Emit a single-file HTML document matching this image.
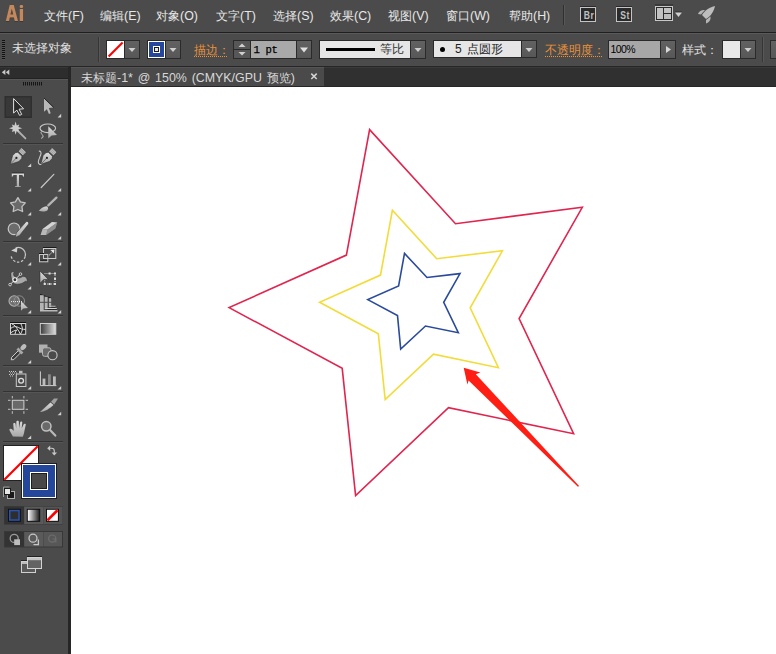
<!DOCTYPE html>
<html><head><meta charset="utf-8">
<style>
*{margin:0;padding:0;box-sizing:border-box}
html,body{width:776px;height:654px;overflow:hidden;background:#fff;font-family:"Liberation Sans",sans-serif}
.a{position:absolute}
#menu{left:0;top:0;width:776px;height:32px;background:#4b4b4b}
#line1{left:0;top:32px;width:776px;height:1px;background:#1f1f1f}
#ctl{left:0;top:33px;width:776px;height:33px;background:#4b4b4b;border-top:1px solid #5a5a5a}
#line2{left:0;top:66px;width:776px;height:1px;background:#262626}
#tools{left:0;top:67px;width:68px;height:587px;background:#4b4b4b}
#tabbar{left:71px;top:67px;width:705px;height:20px;background:#303030;border-top:1px solid #3a3a3a}
#tab{left:71px;top:67px;width:253px;height:19px;background:#4a4a4a;border-top:1px solid #555}
#tabline{left:71px;top:86px;width:705px;height:1px;background:#262626}
#canvas{left:71px;top:87px;width:705px;height:567px;background:#fff}
#vsep{left:68px;top:67px;width:3px;height:587px;background:#262626}
.mi{position:absolute;top:8px;font-size:12.4px;color:#e8e8e8;white-space:nowrap;line-height:16px}
.lbl{position:absolute;font-size:12px;white-space:nowrap;line-height:14px}
</style></head><body>
<div class="a" id="menu"></div>
<div class="a" id="line1"></div>
<div class="a" id="ctl"></div>
<div class="a" id="line2"></div>
<div class="a" id="tools"></div>
<div class="a" id="vsep"></div>
<div class="a" id="tabbar"></div>
<div class="a" id="tab"></div>
<div class="a" id="tabline"></div>
<div class="a" id="canvas"></div>

<!-- tools -->
<svg class="a" style="left:0;top:0" width="68" height="654" viewBox="0 0 68 654">
<defs>
<linearGradient id="g" x1="0" y1="0" x2="0" y2="1"><stop offset="0" stop-color="#dcdcdc"/><stop offset="1" stop-color="#a8a8a8"/></linearGradient>
<linearGradient id="gh" x1="0" y1="0" x2="1" y2="0"><stop offset="0" stop-color="#3a3a3a"/><stop offset="1" stop-color="#e0e0e0"/></linearGradient>
<linearGradient id="gw" x1="0" y1="0" x2="1" y2="0"><stop offset="0" stop-color="#ffffff"/><stop offset="1" stop-color="#222"/></linearGradient>
</defs>
<!-- header -->
<rect x="0" y="67" width="68" height="1" fill="#363636"/>
<rect x="0" y="68" width="68" height="10" fill="#2d2d2d"/>
<rect x="0" y="78" width="68" height="1" fill="#222"/>
<rect x="0" y="79" width="68" height="1" fill="#575757"/>
<polygon points="1.8,72.3 5.4,69.5 5.4,75.1" fill="#c8c8c8"/>
<polygon points="5.8,72.3 9.3,69.5 9.3,75.1" fill="#c8c8c8"/>
<g fill="#151515">
<rect x="23" y="82" width="1" height="3.5"/><rect x="25" y="82" width="1" height="3.5"/><rect x="27" y="82" width="1" height="3.5"/><rect x="29" y="82" width="1" height="3.5"/><rect x="31" y="82" width="1" height="3.5"/><rect x="33" y="82" width="1" height="3.5"/><rect x="35" y="82" width="1" height="3.5"/><rect x="37" y="82" width="1" height="3.5"/><rect x="39" y="82" width="1" height="3.5"/><rect x="41" y="82" width="1" height="3.5"/>
</g>
<!-- separators -->
<rect x="3" y="143" width="60" height="1" fill="#333"/><rect x="3" y="144" width="60" height="1" fill="#555"/>
<rect x="3" y="241" width="60" height="1" fill="#333"/><rect x="3" y="242" width="60" height="1" fill="#555"/>
<rect x="3" y="315" width="60" height="1" fill="#333"/><rect x="3" y="316" width="60" height="1" fill="#555"/>
<rect x="3" y="365" width="60" height="1" fill="#333"/><rect x="3" y="366" width="60" height="1" fill="#555"/>
<rect x="3" y="391" width="60" height="1" fill="#333"/><rect x="3" y="392" width="60" height="1" fill="#555"/>
<rect x="3" y="441" width="60" height="1" fill="#333"/><rect x="3" y="442" width="60" height="1" fill="#555"/>
<!-- corner triangles -->
<g fill="#d0d0d0">
<polygon points="61.2,113.8 61.2,117.4 57.6,117.4"/>
<polygon points="31.2,163.5 31.2,167.1 27.6,167.1"/>
<polygon points="31.2,188 31.2,191.5 27.6,191.5"/>
<polygon points="61.2,188 61.2,191.5 57.6,191.5"/>
<polygon points="31.2,212 31.2,215.5 27.6,215.5"/>
<polygon points="61.2,212 61.2,215.5 57.6,215.5"/>
<polygon points="31.2,236 31.2,239.5 27.6,239.5"/>
<polygon points="61.2,236 61.2,239.5 57.6,239.5"/>
<polygon points="31.2,262 31.2,265.5 27.6,265.5"/>
<polygon points="61.2,262 61.2,265.5 57.6,265.5"/>
<polygon points="31.2,286 31.2,289.5 27.6,289.5"/>
<polygon points="31.2,310 31.2,313.5 27.6,313.5"/>
<polygon points="61.2,310 61.2,313.5 57.6,313.5"/>
<polygon points="31.2,360 31.2,363.5 27.6,363.5"/>
<polygon points="31.2,386 31.2,389.5 27.6,389.5"/>
<polygon points="61.2,386 61.2,389.5 57.6,389.5"/>
<polygon points="61.2,411.8 61.2,415.3 57.6,415.3"/>
<polygon points="31.2,435.5 31.2,439 27.6,439"/>
</g>
<!-- 1 selection (selected) -->
<rect x="4.5" y="96" width="27.5" height="22" fill="#2f2f2f"/>
<rect x="6" y="97.5" width="24.5" height="19" fill="#383838"/>
<path d="M13.6,98.6 L13.6,113 L16.9,110.2 L19.6,115.4 L21.7,114.4 L19.1,109.2 L23.6,108.8 Z" fill="#2a2a2a" stroke="#e0e0e0" stroke-width="1" stroke-linejoin="miter"/>
<!-- 2 direct selection -->
<path d="M44,98.4 L44,111.8 L46.9,109.3 L48.9,114 L50.7,113.3 L48.9,108 L53.2,107.6 Z" fill="#b8b8b8"/>
<line x1="44" y1="98" x2="53.6" y2="107.3" stroke="#1a1a1a" stroke-width="0.8"/>
<!-- 3 magic wand -->
<line x1="17.5" y1="130.5" x2="25.4" y2="138.4" stroke="#b0b0b0" stroke-width="1.9" stroke-linecap="round"/>
<polygon points="15.6,121.6 16.7,125.4 19.3,124.5 18.4,127.1 22.2,128.2 18.4,129.3 19.3,131.9 16.7,131.0 15.6,134.8 14.5,131.0 11.9,131.9 12.8,129.3 9.0,128.2 12.8,127.1 11.9,124.5 14.5,125.4" fill="#cdcdcd"/>
<!-- 4 lasso -->
<ellipse cx="47.8" cy="128.3" rx="7.8" ry="4.3" fill="none" stroke="#c8c8c8" stroke-width="1.1"/>
<path d="M41.5,131.5 C40,133 42.5,134.5 43,136 C43.3,137.5 42,138.5 41,138" fill="none" stroke="#c8c8c8" stroke-width="1"/>
<path d="M48.3,126.2 L48.3,138.6 L51.6,135.6 L57,134.9 Z" fill="url(#g)"/>
<!-- 5 pen -->
<g id="pen">
<polygon points="10.2,164.4 12.6,155.6 15.4,152.7 17.8,152.3 22.0,156.3 21.6,158.7 18.8,161.6" fill="url(#g)" stroke="#2c2c2c" stroke-width="0.6" stroke-linejoin="round"/>
<polygon points="18.2,151.3 21.6,147.6 26.4,152.2 22.9,155.8" fill="#b8b8b8" stroke="#2c2c2c" stroke-width="0.6"/>
<line x1="19.4" y1="150.1" x2="24.0" y2="154.5" stroke="#8a8a8a" stroke-width="0.5"/>
<line x1="20.5" y1="148.9" x2="25.1" y2="153.4" stroke="#8a8a8a" stroke-width="0.5"/>
<circle cx="16.4" cy="157.9" r="1.1" fill="#222"/>
<line x1="10.5" y1="164.1" x2="16.4" y2="157.9" stroke="#444" stroke-width="0.6"/>
</g>
<!-- 6 curvature pen -->
<use href="#pen" x="30.5" y="0"/>
<path d="M38.8,151.2 C40.6,150.8 41.5,152.5 40.8,154.5 C40,157 38.4,159.5 38.3,162 C38.3,164 39.6,164.6 41.4,164.4" fill="none" stroke="#c8c8c8" stroke-width="1.1"/>
<!-- 7 T -->
<rect x="12.2" y="172.6" width="11.6" height="1" fill="#1e1e1e"/>
<path d="M11.8,173.6 H24 V176.8 H23.3 C23.1,175.6 22.6,175.1 21.2,175.1 H19 V185.4 C19,186 19.6,186.2 20.8,186.3 V187.1 H15 V186.3 C16.2,186.2 16.8,186 16.8,185.4 V175.1 H14.6 C13.2,175.1 12.7,175.6 12.5,176.8 H11.8 Z" fill="url(#g)"/>
<!-- 8 line -->
<line x1="41.2" y1="187.5" x2="53.8" y2="174.3" stroke="#c8c8c8" stroke-width="1.2" stroke-linecap="round"/>
<!-- 9 star -->
<polygon points="17.9,197.6 20.4,201.9 25.3,202.9 21.9,206.6 22.6,211.5 17.9,209.5 13.2,211.5 13.9,206.6 10.5,202.9 15.4,201.9" fill="#6a6a6a" stroke="#c4c4c4" stroke-width="1.3" stroke-linejoin="round"/>
<!-- 10 brush -->
<line x1="48.3" y1="205.4" x2="56.4" y2="197.6" stroke="#b4b4b4" stroke-width="2.3" stroke-linecap="round"/>
<path d="M38.8,210.7 C40.5,208.6 43.6,206.6 46.6,206.2 C48.4,206.7 48.6,209 47.2,210.4 C45,212 41.6,211.7 38.8,210.7 Z" fill="url(#g)"/>
<!-- 11 shaper -->
<circle cx="14" cy="228.8" r="5.8" fill="#6c6c6c" stroke="#c8c8c8" stroke-width="1.2"/>
<path d="M26.2,221.6 C27.6,220.8 29.4,222.6 28.6,224 L19.6,235.4 L15.2,237.4 L16.4,232.8 Z" fill="url(#g)" stroke="#333" stroke-width="0.6"/>
<!-- 12 eraser -->
<path d="M40.6,235 L42.6,229 L52,222 L57.2,222.6 L55.4,228.4 L46.2,235 Z" fill="#6e6e6e"/>
<path d="M42.6,229 L52,222 L57.2,222.6 L47.6,229.6 Z" fill="#d4d4d4"/>
<path d="M40.6,235 L42.6,229 L47.6,229.6 L46.2,235 Z" fill="#b8b8b8"/>
<path d="M47.6,229.6 L57.2,222.6 L55.4,228.4 L46.2,235 Z" fill="#8f8f8f"/>
<!-- 13 rotate -->
<path d="M15.6,248 A7.1,7.1 0 0 1 25.1,256.6" fill="none" stroke="#c4c4c4" stroke-width="1.25"/>
<path d="M25.1,256.6 A7.1,7.1 0 0 1 11.1,255.6" fill="none" stroke="#c4c4c4" stroke-width="1.3" stroke-dasharray="2.4 1.7"/>
<polygon points="11.2,250.6 17.4,247.2 16.9,252.4" fill="#d0d0d0"/>
<!-- 14 scale -->
<rect x="43" y="247" width="13.5" height="1" fill="#1a1a1a"/>
<rect x="43.5" y="248.5" width="12.3" height="10" fill="#484848" stroke="#cccccc" stroke-width="1"/>
<rect x="39" y="253" width="5" height="1" fill="#1a1a1a"/>
<rect x="39.5" y="254.5" width="8.3" height="7.3" fill="none" stroke="#c8c8c8" stroke-width="1"/>
<rect x="40.3" y="259.8" width="6.8" height="1" fill="#1e1e1e"/>
<line x1="49.2" y1="255.2" x2="53" y2="251.4" stroke="#e0e0e0" stroke-width="1" stroke-dasharray="1.1 0.6"/>
<polygon points="54.4,249.6 50.4,250 54,253.6" fill="#e8e8e8"/>
<!-- 15 puppet -->
<path d="M10.9,273.6 C10.9,272 12.6,271.1 14.4,272.1 C13.4,273 13.2,274.2 13.7,275.3 C15.2,278.2 19.2,279 22.4,276.6 C24.8,275.8 27,277.4 27.2,280.2 L27,282.4 C26.6,281.2 25.8,280.8 25,281.6 C22.6,283.8 17.8,284.8 14.4,283.8 C11.8,281.6 10.8,277.2 10.9,273.6 Z" fill="#a8a8a8" stroke="#2e2e2e" stroke-width="0.5"/>
<line x1="10.1" y1="284.6" x2="20.5" y2="274.1" stroke="#e8e8e8" stroke-width="0.9"/>
<circle cx="14.9" cy="279.8" r="2" fill="#333" stroke="#f0f0f0" stroke-width="1.1"/>
<circle cx="10.1" cy="284.6" r="1.3" fill="#444" stroke="#e8e8e8" stroke-width="0.8"/>
<circle cx="20.5" cy="274.1" r="1.3" fill="#444" stroke="#e8e8e8" stroke-width="0.8"/>
<!-- 16 free transform -->
<path d="M44.5,273.5 H55 V284 H44.7 V279" fill="none" stroke="#c8c8c8" stroke-width="1" stroke-dasharray="1 1"/>
<g fill="#e0e0e0"><rect x="48.6" y="272.5" width="2" height="2"/><rect x="54" y="272.5" width="2" height="2"/><rect x="54" y="277.9" width="2" height="2"/><rect x="54" y="283" width="2" height="2"/><rect x="48.6" y="283" width="2" height="2"/><rect x="43.7" y="283" width="2" height="2"/></g>
<path d="M40,271 L48.3,279.4 L43.6,279.6 L40,283.3 Z" fill="url(#g)" stroke="#222" stroke-width="0.5"/>
<!-- 17 shape builder -->
<circle cx="14.2" cy="301" r="5.2" fill="#6e6e6e" stroke="#b0b0b0" stroke-width="1.1"/>
<circle cx="19.3" cy="301" r="5.2" fill="none" stroke="#8e8e8e" stroke-width="1"/>
<line x1="11" y1="301.6" x2="22" y2="301.6" stroke="#f0f0f0" stroke-width="1" stroke-dasharray="1 1"/>
<path d="M21,301 L21,310.8 L23.3,308.4 L28,308 Z" fill="url(#g)"/>
<!-- 18 perspective grid -->
<line x1="40" y1="294.3" x2="51.4" y2="298.3" stroke="#1a1a1a" stroke-width="1"/>
<g fill="#b4b4b4">
<rect x="40" y="295.2" width="3.7" height="6.6"/><rect x="40" y="302.8" width="3.7" height="7.4"/>
<rect x="44.8" y="296.8" width="2.8" height="5"/><rect x="44.8" y="302.8" width="2.8" height="5.2"/>
<rect x="49" y="298.2" width="2.2" height="3.6"/><rect x="49" y="302.8" width="2.2" height="3"/>
</g>
<g fill="#d4d4d4"><rect x="49" y="305.8" width="6.5" height="1"/><rect x="44.8" y="308" width="12" height="1"/><rect x="40" y="310.2" width="17.5" height="1.2"/></g>
<g fill="#1e1e1e"><rect x="51.2" y="306.8" width="4.3" height="0.8"/><rect x="47.6" y="309" width="9.2" height="0.8"/></g>
<!-- 19 mesh -->
<rect x="10" y="322" width="16" height="1" fill="#151515"/>
<rect x="10.5" y="323.5" width="15.2" height="10.8" fill="#262626" stroke="#d4d4d4" stroke-width="1"/>
<path d="M10.5,328.6 C13,326.4 16,326 18.5,327.5 C20.5,328.8 22.5,329.4 25.5,329.4 M12,324 C14.5,325 16,326.5 17,328.5 C18.3,330.5 19.5,332 20.5,334.2 M20.8,323.6 C22,326 22.6,328 22.3,330 C22,331.5 21.2,333 20.5,334.2 M10.5,333 C12.5,331.5 14.5,330.5 16.6,330 M15,334.2 C15.2,332.5 15.8,331.2 16.6,330" fill="none" stroke="#e0e0e0" stroke-width="1"/>
<!-- 20 gradient -->
<rect x="40.3" y="323.5" width="15.5" height="10.8" fill="url(#gh)" stroke="#cfcfcf" stroke-width="1"/>
<!-- 21 eyedropper -->
<path d="M11.3,359.8 L11.6,357.4 L18.8,350.2 L21,352.4 L13.8,359.6 Z" fill="#3a3a3a" stroke="#dcdcdc" stroke-width="0.9"/>
<ellipse cx="23.5" cy="347.2" rx="3.4" ry="2.3" transform="rotate(-45 23.4 347.3)" fill="#bdbdbd"/>
<rect x="16.4" y="349.6" width="7" height="2.8" transform="rotate(45 19.9 351)" fill="#a8a8a8"/>
<!-- 22 blend -->
<rect x="39" y="344.5" width="8.5" height="8.2" fill="#b0b0b0"/>
<rect x="42.5" y="347.8" width="8.5" height="8.5" rx="2" fill="#6a6a6a" stroke="#b8b8b8" stroke-width="1"/>
<circle cx="52.5" cy="355.2" r="4.6" fill="#4b4b4b" stroke="#c8c8c8" stroke-width="1.1"/>
<!-- 23 symbol sprayer -->
<g fill="#c8c8c8">
<rect x="9" y="371" width="1" height="1"/><rect x="11" y="371" width="1" height="1"/><rect x="13" y="371" width="1" height="1"/><rect x="15" y="371" width="1" height="1"/>
<rect x="10" y="372.5" width="1" height="1"/><rect x="12" y="372.5" width="1" height="1"/><rect x="14" y="372.5" width="1" height="1"/><rect x="16" y="372.5" width="1" height="1"/>
<rect x="9" y="374" width="1" height="1"/><rect x="11" y="374" width="1" height="1"/><rect x="13" y="374" width="1" height="1"/>
<rect x="10" y="375.5" width="1" height="1"/><rect x="12" y="375.5" width="1" height="1"/>
</g>
<rect x="19" y="370.8" width="3.5" height="2.5" fill="#c0c0c0"/>
<rect x="16.3" y="374" width="9.6" height="12.5" fill="#4a4a4a" stroke="#c8c8c8" stroke-width="1"/>
<circle cx="21.1" cy="380.8" r="2.4" fill="#4a4a4a" stroke="#e0e0e0" stroke-width="1.3"/>
<!-- 24 column graph -->
<path d="M40.4,371.4 V385.6 H56.4" fill="none" stroke="#d0d0d0" stroke-width="1"/>
<rect x="42.6" y="378.6" width="2.8" height="6.5" fill="#bdbdbd"/>
<rect x="48" y="374.3" width="2.8" height="10.8" fill="#8a8a8a"/>
<rect x="53" y="376.4" width="2.8" height="8.7" fill="#bdbdbd"/>
<!-- 25 artboard -->
<rect x="12.3" y="400.3" width="11.6" height="9" fill="#6a6a6a" stroke="#d0d0d0" stroke-width="1"/>
<g stroke="#d0d0d0" stroke-width="0.9">
<line x1="8" y1="400.3" x2="10.5" y2="400.3"/><line x1="25.6" y1="400.3" x2="28" y2="400.3"/>
<line x1="8" y1="409.3" x2="10.5" y2="409.3"/><line x1="25.6" y1="409.3" x2="28" y2="409.3"/>
<line x1="12.3" y1="396" x2="12.3" y2="398.4"/><line x1="23.9" y1="396" x2="23.9" y2="398.4"/>
<line x1="12.3" y1="411.2" x2="12.3" y2="413.8"/><line x1="23.9" y1="411.2" x2="23.9" y2="413.8"/>
</g>
<!-- 26 slice -->
<path d="M40,412 L50.5,402.5 L53.5,405 C50,408.5 45,411.5 40,412 Z" fill="url(#g)"/>
<path d="M51,401.8 L54,398.4 L58,398.4 L54.2,404.6 Z" fill="#a0a0a0"/>
<!-- 27 hand -->
<path transform="translate(17.6,0) scale(1.2,1) translate(-16.2,0)" d="M12.3,436.5 C10.8,433 9.5,431 9.3,429.5 C9.8,428.4 11.2,428.6 12,429.8 L13,431 L12.6,424 C12.6,422.8 14.4,422.8 14.5,424 L15,428.5 L15.2,421.6 C15.3,420.3 17.2,420.3 17.2,421.6 L17.4,428.4 L18.3,422.4 C18.5,421.2 20.2,421.4 20.1,422.6 L19.6,428.6 L21.3,424.3 C21.7,423.3 23.2,423.7 23,424.8 L21.8,431.5 C21.5,434 21,435.5 20.5,436.7 Z" fill="url(#g)"/>
<!-- 28 zoom -->
<circle cx="46.3" cy="426.3" r="4.7" fill="#6a6a6a" stroke="#c0c0c0" stroke-width="1.5"/>
<line x1="49.8" y1="429.8" x2="55.3" y2="435.6" stroke="#b8b8b8" stroke-width="2.2" stroke-linecap="round"/>
<!-- fill / stroke -->
<rect x="3" y="445" width="36" height="36" fill="#222"/>
<rect x="4" y="446" width="34" height="34" fill="#fff"/>
<line x1="4.3" y1="479.7" x2="37.7" y2="446.3" stroke="#ff0000" stroke-width="2.2"/>
<path d="M49.5,448.3 H51.6 C53.4,448.3 54.3,449.2 54.3,451 V453" fill="none" stroke="#c8c8c8" stroke-width="1.1"/>
<polygon points="47.2,448.3 50.2,445.6 50.2,451" fill="#c8c8c8"/>
<polygon points="51.6,452.6 57,452.6 54.3,455.6" fill="#c8c8c8"/>
<rect x="21" y="463" width="36" height="36" fill="#1e1e1e"/>
<rect x="22" y="464" width="34" height="34" fill="#fff"/>
<rect x="23" y="465" width="32" height="32" fill="#24479c"/>
<rect x="30" y="472" width="18" height="18" fill="#fff"/>
<rect x="31" y="473" width="16" height="16" fill="#1e1e1e"/>
<rect x="32" y="474" width="14" height="14" fill="#484848"/>
<!-- default fill stroke -->
<path d="M3.5,497 V487 H9.5" fill="none" stroke="#9a9a9a" stroke-width="1"/>
<rect x="7.5" y="491.5" width="7" height="7" fill="#1a1a1a" stroke="#b0b0b0" stroke-width="1"/>
<rect x="4.5" y="488.5" width="6" height="6" fill="#e6e6e6" stroke="#1a1a1a" stroke-width="1"/>
<!-- color modes -->
<rect x="4" y="506.2" width="59" height="18.4" fill="#3a3a3a"/>
<rect x="4.5" y="506.7" width="19.5" height="17.4" fill="#333"/>
<rect x="24.2" y="506.7" width="19.4" height="17.4" fill="#5a5a5a"/>
<rect x="43.8" y="506.7" width="18.8" height="17.4" fill="#555"/>
<rect x="8" y="508.8" width="12.8" height="13" fill="#111"/>
<rect x="9" y="509.8" width="10.8" height="11" fill="#2b53b0"/>
<rect x="10.5" y="511.3" width="7.8" height="8" fill="#2e2e2e"/>
<rect x="26.8" y="508.8" width="13.4" height="13" fill="#111"/>
<rect x="27.8" y="509.8" width="11.4" height="11" fill="url(#gw)"/>
<rect x="46" y="508.8" width="12.9" height="13" fill="#111"/>
<rect x="47" y="509.8" width="10.9" height="11" fill="#fff"/>
<line x1="47.4" y1="520.4" x2="57.5" y2="510.2" stroke="#f00" stroke-width="2.7"/>
<!-- draw modes -->
<rect x="4" y="531" width="59" height="16.5" fill="#383838"/>
<rect x="5" y="532" width="19" height="14.5" fill="#333"/>
<rect x="24.2" y="532" width="19.2" height="14.5" fill="#5a5a5a"/>
<rect x="43.6" y="532" width="18.4" height="14.5" fill="#575757"/>
<circle cx="14.2" cy="538.4" r="4" fill="none" stroke="#9c9c9c" stroke-width="1.3"/>
<rect x="14.2" y="539.3" width="5.8" height="5.8" fill="#bdbdbd"/>
<circle cx="33" cy="538.2" r="4" fill="none" stroke="#c8c8c8" stroke-width="1.3"/>
<path d="M33.5,544.6 H38.4 V539.6" fill="none" stroke="#c8c8c8" stroke-width="1.3"/>
<circle cx="52.2" cy="538.6" r="3.6" fill="none" stroke="#6e6e6e" stroke-width="1.2"/>
<path d="M52.6,539 H55.8 V542.4" fill="none" stroke="#6e6e6e" stroke-width="1.2"/>
<!-- screen mode -->
<rect x="21" y="560" width="8" height="1" fill="#222"/>
<rect x="21.5" y="561.5" width="14" height="11" fill="#5a5a5a" stroke="#d0d0d0" stroke-width="1"/>
<rect x="22" y="562" width="13" height="2" fill="#bdbdbd"/>
<rect x="27" y="556" width="15" height="1" fill="#222"/>
<rect x="27.5" y="557.5" width="14" height="11" fill="#636363" stroke="#d4d4d4" stroke-width="1"/>
<rect x="28" y="558" width="13" height="2.2" fill="#c4c4c4"/>
</svg>

<!-- menu -->
<svg class="a" style="left:0;top:0" width="30" height="28"><g fill="#222" opacity="0.5" transform="translate(0,0.7)"><path fill-rule="evenodd" d="M5.8,21 L9.7,5.1 L13.8,5.1 L18,21 L14.7,21 L13.9,17.6 L9.8,17.6 L9.1,21 Z M10.4,14.5 L13.2,14.5 L11.85,8.7 Z"/><rect x="19.7" y="9" width="3.4" height="12"/></g><g fill="#c4885c"><path fill-rule="evenodd" d="M5.8,21 L9.7,5.1 L13.8,5.1 L18,21 L14.7,21 L13.9,17.6 L9.8,17.6 L9.1,21 Z M10.4,14.5 L13.2,14.5 L11.85,8.7 Z"/><rect x="19.7" y="9" width="3.4" height="12"/><rect x="19.7" y="5.1" width="3.4" height="2.9" rx="1.2"/></g></svg>
<div class="mi" style="left:44px">文件(F)</div>
<div class="mi" style="left:100px">编辑(E)</div>
<div class="mi" style="left:156px">对象(O)</div>
<div class="mi" style="left:216px">文字(T)</div>
<div class="mi" style="left:273px">选择(S)</div>
<div class="mi" style="left:330px">效果(C)</div>
<div class="mi" style="left:388px">视图(V)</div>
<div class="mi" style="left:446px">窗口(W)</div>
<div class="mi" style="left:509px">帮助(H)</div>



<div class="a" style="left:563px;top:5px;width:1px;height:20px;background:#303030"></div><div class="a" style="left:564px;top:5px;width:1px;height:20px;background:#585858"></div>
<div class="a" style="left:580px;top:6px;width:16px;height:1px;background:#2a2a2a"></div>
<div class="a" style="left:580px;top:7px;width:16px;height:15px;background:#2b2b2b;border:1px solid #c4c4c4"></div>
<div class="a" style="left:580.5px;top:9.8px;width:16px;text-align:center;font-size:10px;font-weight:bold;color:#c0c0c0;line-height:11px;transform:scaleX(0.86);letter-spacing:0.4px">Br</div>
<div class="a" style="left:616px;top:6px;width:16px;height:1px;background:#2a2a2a"></div>
<div class="a" style="left:616px;top:7px;width:16px;height:15px;background:#2b2b2b;border:1px solid #c4c4c4"></div>
<div class="a" style="left:616.5px;top:9.8px;width:16px;text-align:center;font-size:10px;font-weight:bold;color:#c0c0c0;line-height:11px;transform:scaleX(0.86);letter-spacing:0.4px">St</div>
<svg class="a" style="left:654px;top:4px" width="32" height="20">
<rect x="1" y="0.5" width="18" height="1" fill="#2a2a2a"/>
<rect x="1.5" y="2.5" width="17" height="14" fill="#2a2a2a" stroke="#c8c8c8" stroke-width="1"/>
<rect x="3" y="4" width="6" height="11" fill="#c2c2c2"/>
<rect x="10" y="4" width="7" height="5" fill="#c2c2c2"/>
<rect x="10" y="10" width="7" height="5" fill="#bdbdbd"/>
<rect x="21" y="7.5" width="7" height="1" fill="#2a2a2a"/>
<polygon points="21,8.5 28,8.5 24.5,13" fill="#cfcfcf"/>
</svg>
<svg class="a" style="left:696px;top:5px" width="21" height="20">
<path d="M19,1 C14,2 9,5 6,10 L10,14 C15,11 18,6 19,1 Z" fill="#bdbdbd"/>
<path d="M2,9 C3,6 6,4.5 9,5 L5,9.5 Z" fill="#b5b5b5"/>
<path d="M10,18.5 C13,17.5 15,15 14.5,11.5 L10,15 Z" fill="#b5b5b5"/>
</svg>

<!-- control bar -->
<div class="a" style="left:2px;top:40px;width:3px;height:20px;background:repeating-linear-gradient(#111 0 1px,#545454 1px 2px)"></div>
<div class="lbl" style="left:12px;top:41px;color:#e0e0e0;font-size:12px">未选择对象</div>
<div class="a" style="left:98px;top:37px;width:1px;height:25px;background:#363636"></div><div class="a" style="left:99px;top:37px;width:1px;height:25px;background:#585858"></div>
<!-- fill swatch -->
<div class="a" style="left:106px;top:40px;width:34px;height:19px;background:#2a2a2a"></div>
<div class="a" style="left:107px;top:41px;width:17px;height:17px;background:#fff"></div>
<svg class="a" style="left:107px;top:41px" width="17" height="17"><line x1="1.6" y1="15.6" x2="15.6" y2="1.6" stroke="#f00" stroke-width="2.1"/></svg>
<div class="a" style="left:125px;top:41px;width:14px;height:17px;background:linear-gradient(#626262,#575757)"></div>
<svg class="a" style="left:125px;top:41px" width="14" height="17"><polygon points="3.5,7 10.5,7 7,11" fill="#cfcfcf"/></svg>
<!-- stroke swatch -->
<div class="a" style="left:147px;top:40px;width:34px;height:19px;background:#2a2a2a"></div>
<div class="a" style="left:148px;top:41px;width:17px;height:17px;background:#fff"></div>
<div class="a" style="left:149px;top:42px;width:15px;height:15px;background:#24479c"></div>
<div class="a" style="left:153px;top:46px;width:7px;height:7px;background:#fff"></div>
<div class="a" style="left:154px;top:47px;width:5px;height:5px;background:#1a1a1a"></div><div class="a" style="left:155px;top:48px;width:3px;height:3px;background:#e8e8e8"></div>
<div class="a" style="left:166px;top:41px;width:14px;height:17px;background:linear-gradient(#626262,#575757)"></div>
<svg class="a" style="left:166px;top:41px" width="14" height="17"><polygon points="3.5,7 10.5,7 7,11" fill="#cfcfcf"/></svg>
<!-- stroke label -->
<div class="lbl" style="left:194px;top:43px;color:#e8913a;font-size:12px">描边：</div>
<div class="a" style="left:194px;top:56px;width:33px;height:1px;background:repeating-linear-gradient(90deg,#e8913a 0 1px,transparent 1px 2px)"></div>
<!-- stepper -->
<div class="a" style="left:233px;top:40px;width:79px;height:19px;background:#2a2a2a"></div>
<div class="a" style="left:234px;top:41px;width:16px;height:8px;background:#575757"></div>
<div class="a" style="left:234px;top:50px;width:16px;height:8px;background:#575757"></div>
<svg class="a" style="left:234px;top:41px" width="16" height="17"><polygon points="4.5,6 11.5,6 8,2.5" fill="#d0d0d0"/><polygon points="4.5,11 11.5,11 8,14.5" fill="#d0d0d0"/></svg>
<div class="a" style="left:251px;top:41px;width:45px;height:17px;background:#a9a9a9"></div>
<div class="lbl" style="left:253.5px;top:42.5px;color:#000;font-family:'Liberation Mono',monospace;font-size:10.6px;font-weight:normal;letter-spacing:-0.36px;line-height:14px;-webkit-text-stroke:0.25px #000">1 pt</div>
<div class="a" style="left:297px;top:41px;width:14px;height:17px;background:linear-gradient(#626262,#575757)"></div>
<svg class="a" style="left:297px;top:41px" width="14" height="17"><polygon points="3,6.5 11,6.5 7,11.5" fill="#e0e0e0"/></svg>
<!-- width profile -->
<div class="a" style="left:319px;top:40px;width:107px;height:19px;background:#2a2a2a"></div>
<div class="a" style="left:320px;top:41px;width:90px;height:17px;background:#e6e6e6"></div>
<div class="a" style="left:326px;top:48px;width:49px;height:3px;background:#000"></div>
<div class="lbl" style="left:380px;top:42px;color:#333;font-size:12px">等比</div>
<div class="a" style="left:411px;top:41px;width:14px;height:17px;background:linear-gradient(#626262,#575757)"></div>
<svg class="a" style="left:411px;top:41px" width="14" height="17"><polygon points="3.5,7 10.5,7 7,11" fill="#cfcfcf"/></svg>
<!-- brush -->
<div class="a" style="left:433px;top:40px;width:104px;height:18px;background:#2a2a2a"></div>
<div class="a" style="left:434px;top:41px;width:87px;height:16px;background:#e6e6e6"></div>
<div class="a" style="left:439.5px;top:46.5px;width:5.5px;height:5.5px;border-radius:50%;background:#000"></div>
<div class="lbl" style="left:455px;top:42px;color:#222;font-size:12px">5</div>
<div class="lbl" style="left:467px;top:42px;color:#222;font-size:12px">点圆形</div>
<div class="a" style="left:522px;top:41px;width:14px;height:16px;background:linear-gradient(#626262,#575757)"></div>
<svg class="a" style="left:522px;top:41px" width="14" height="16"><polygon points="3.5,7 10.5,7 7,11" fill="#cfcfcf"/></svg>
<!-- opacity -->
<div class="lbl" style="left:545px;top:43px;color:#e8913a;font-size:12px">不透明度：</div>
<div class="a" style="left:545px;top:56px;width:57px;height:1px;background:repeating-linear-gradient(90deg,#e8913a 0 1px,transparent 1px 2px)"></div>
<div class="a" style="left:608px;top:40px;width:68px;height:19px;background:#2a2a2a"></div>
<div class="a" style="left:609px;top:41px;width:51px;height:17px;background:#a7a7a7"></div>
<div class="lbl" style="left:610.5px;top:41.5px;color:#000;font-size:10.5px;letter-spacing:-0.55px">100%</div>
<div class="a" style="left:661px;top:41px;width:14px;height:17px;background:linear-gradient(#626262,#575757)"></div>
<svg class="a" style="left:661px;top:41px" width="14" height="17"><polygon points="5,5 10,8.5 5,12" fill="#d8d8d8"/></svg>
<!-- style -->
<div class="lbl" style="left:682px;top:43px;color:#e0e0e0;font-size:12px">样式：</div>
<div class="a" style="left:722px;top:40px;width:34px;height:19px;background:#2a2a2a"></div>
<div class="a" style="left:723px;top:41px;width:17px;height:17px;background:#e8e8e8"></div>
<div class="a" style="left:741px;top:41px;width:14px;height:17px;background:linear-gradient(#626262,#575757)"></div>
<svg class="a" style="left:741px;top:41px" width="14" height="17"><polygon points="3.5,7 10.5,7 7,11" fill="#cfcfcf"/></svg>
<div class="a" style="left:762px;top:37px;width:1px;height:25px;background:#363636"></div><div class="a" style="left:763px;top:37px;width:1px;height:25px;background:#585858"></div>
<div class="a" style="left:770px;top:40px;width:6px;height:19px;background:#2a2a2a"></div>
<div class="a" style="left:771px;top:41px;width:5px;height:17px;background:linear-gradient(#626262,#575757)"></div>

<!-- tab -->
<div class="lbl" style="left:81px;top:71px;color:#d8d8d8;font-size:12.4px;word-spacing:1.4px">未标题-1* @ 150% (CMYK/GPU 预览)</div>
<svg class="a" style="left:308px;top:71px" width="12" height="11"><path d="M3.3,2.6 L8.7,8 M8.7,2.6 L3.3,8" stroke="#d4d4d4" stroke-width="1.5"/></svg>

<!-- stars -->
<svg class="a" style="left:0;top:0" width="776" height="654" viewBox="0 0 776 654">
<polygon fill="none" stroke="#e0254f" stroke-width="1.6" points="369.6,129.6 455.5,223.7 582.3,207.3 519.1,318.5 573.6,433.7 448.5,407.7 355.6,495.6 342.2,368.3 229.1,307.6 346.4,255.1"/>
<polygon fill="none" stroke="#f2dc3a" stroke-width="1.6" points="392.4,210.3 436.7,258.7 502.4,250.8 470.2,307.9 498.4,367.7 433.5,354.2 385.2,399.5 378.3,333.8 319.6,302.2 380.5,275.1"/>
<polygon fill="none" stroke="#2a4a9c" stroke-width="1.6" points="404.5,253.4 427,277.5 460,273.6 443.7,302.4 458.3,332.7 425.5,326 400.7,349.1 397.5,315.6 367.8,299.6 398.6,286"/>
<polygon fill="#fe1e14" points="463.7,367.8 480.4,372.4 475.8,374.2 579.1,485.9 577.9,486.7 468.6,380.4 467.4,384.5"/>
</svg>
</body></html>
